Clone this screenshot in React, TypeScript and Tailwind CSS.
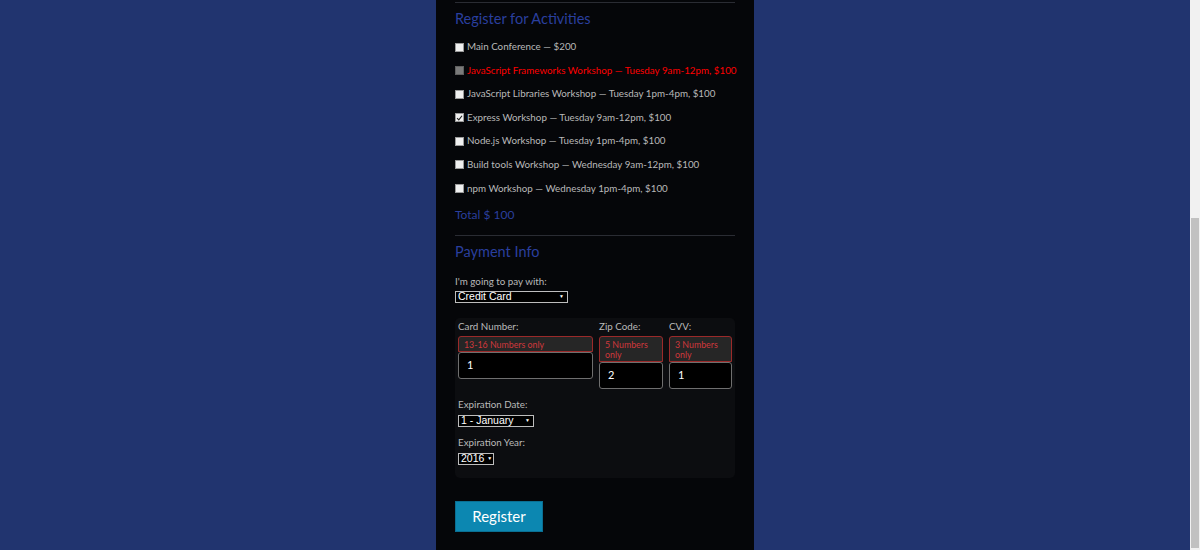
import React from 'react';

// Activity rows shown in the registration list
const activities = [
  { label: 'Main Conference — $200', state: 'off' },
  { label: 'JavaScript Frameworks Workshop — Tuesday 9am-12pm, $100', state: 'disabled' },
  { label: 'JavaScript Libraries Workshop — Tuesday 1pm-4pm, $100', state: 'off' },
  { label: 'Express Workshop — Tuesday 9am-12pm, $100', state: 'on' },
  { label: 'Node.js Workshop — Tuesday 1pm-4pm, $100', state: 'off' },
  { label: 'Build tools Workshop — Wednesday 9am-12pm, $100', state: 'off' },
  { label: 'npm Workshop — Wednesday 1pm-4pm, $100', state: 'off' },
];

const Box = ({ state }: { state: string }) => {
  if (state === 'disabled') {
    return <span className="w-[9px] h-[9px] bg-[#7a7a7a] border border-[#5f5f5f] shrink-0" />;
  }
  return (
    <span className="w-[9px] h-[9px] bg-[#f0f0f0] border border-[#9a9a9a] shrink-0 flex items-center justify-center">
      {state === 'on' && (
        <svg viewBox="0 0 10 10" className="w-[8px] h-[8px]">
          <path d="M1.5 5.2 L4 7.6 L8.6 1.8" fill="none" stroke="#222" strokeWidth="1.6" />
        </svg>
      )}
    </span>
  );
};

const FakeSelect = ({ value, width }: { value: string; width: string }) => (
  <div
    className={`${width} h-[12px] border border-[#bdbdbd] bg-black text-white flex items-center pl-[2px] pr-[3px] text-[10.5px] leading-none`}
    style={{ fontFamily: '"Liberation Sans", Arial, sans-serif' }}
  >
    <span>{value}</span>
    <span className="text-[5px] ml-auto pl-[3px]">▼</span>
  </div>
);

const Field = ({ error, value, width }: { error: React.ReactNode; value: string; width: string }) => (
  <div className={width}>
    <div className="border border-[#9b2a2a] rounded-t-[3px] bg-[#262626] text-[#d0383c] text-[8.8px] leading-[10px] px-[5px] pt-[3px] pb-[1px]">
      {error}
    </div>
    <div className="h-[27px] bg-black border border-[#6f6f6f] rounded-[3px] text-white text-[11px] flex items-center px-[8px]">
      {value}
    </div>
  </div>
);

export default function App() {
  return (
    <div className="w-[1200px] h-[550px] flex overflow-hidden bg-[#21346f]" style={{ fontFamily: 'Lato, "Noto Sans", sans-serif' }}>
      <div className="flex-1 flex justify-center">
        <div className="w-[318px] h-full bg-[#050609] px-[19px]">
          <div className="h-[3px] border-b border-[#2a2c33]" />
          <h2 className="text-[#2a3f9e] text-[14.5px] mt-[7px] leading-[18px]">Register for Activities</h2>

          <div className="mt-[12px] flex flex-col gap-[9.6px]">
            {activities.map((a) => (
              <label key={a.label} className="flex items-center gap-[2px] h-[14px] text-[9.8px] leading-none whitespace-nowrap">
                <Box state={a.state} />
                <span className={a.state === 'disabled' ? 'text-[#ff0000] ml-[1px]' : 'text-[#b9b9b9] ml-[1px]'}>{a.label}</span>
              </label>
            ))}
          </div>

          <div className="text-[#2a3f9e] text-[12px] mt-[11px] leading-[16px]">Total $ 100</div>
          <div className="mt-[12px] border-t border-[#2a2c33]" />

          <h2 className="text-[#2a3f9e] text-[14.5px] mt-[7px] leading-[18px]">Payment Info</h2>
          <div className="text-[#b9b9b9] text-[9.8px] mt-[13px] leading-[14px]">I'm going to pay with:</div>
          <div className="mt-[3px]">
            <FakeSelect value="Credit Card" width="w-[113px]" />
          </div>

          <div className="mt-[15px] bg-[#0c0d10] rounded-[5px] px-[3px] pt-[1px] pb-[13px]">
            <div className="flex gap-[6px]">
              <div className="flex flex-col">
                <span className="text-[#b9b9b9] text-[9.8px] leading-[14px] mb-[3px]">Card Number:</span>
                <Field error="13-16 Numbers only" value="1" width="w-[135px]" />
              </div>
              <div className="flex flex-col">
                <span className="text-[#b9b9b9] text-[9.8px] leading-[14px] mb-[3px]">Zip Code:</span>
                <Field error={<>5 Numbers<br />only</>} value="2" width="w-[64px]" />
              </div>
              <div className="flex flex-col">
                <span className="text-[#b9b9b9] text-[9.8px] leading-[14px] mb-[3px]">CVV:</span>
                <Field error={<>3 Numbers<br />only</>} value="1" width="w-[63px]" />
              </div>
            </div>

            <div className="text-[#b9b9b9] text-[9.8px] leading-[14px] mt-[8px]">Expiration Date:</div>
            <div className="mt-[4px]">
              <FakeSelect value="1 - January" width="w-[76px]" />
            </div>
            <div className="text-[#b9b9b9] text-[9.8px] leading-[14px] mt-[8px]">Expiration Year:</div>
            <div className="mt-[4px]">
              <FakeSelect value="2016" width="w-[36px]" />
            </div>
          </div>

          <button className="mt-[23px] w-[88px] h-[31px] bg-[#0c87b1] text-white text-[15px] border border-[#0a6f93]">
            Register
          </button>
        </div>
      </div>
      <div className="w-[10px] h-full bg-[#f1f1f1] flex flex-col pt-[218px] pb-[2px] px-[1px]">
        <div className="flex-1 bg-[#c1c1c1]" />
      </div>
    </div>
  );
}
